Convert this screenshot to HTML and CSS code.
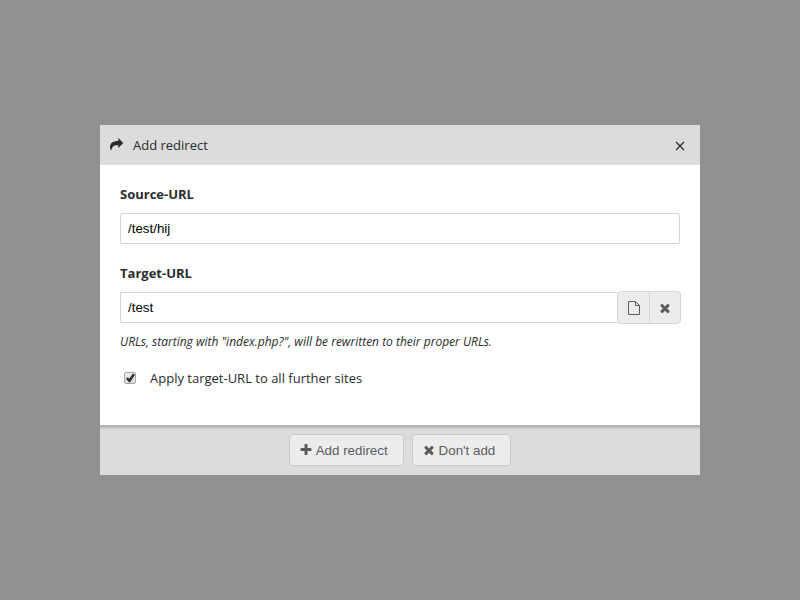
FILE: index.html
```html
<!DOCTYPE html>
<html lang="en">
<head>
<meta charset="utf-8">
<meta name="viewport" content="width=device-width, initial-scale=1">
<title>Add redirect</title>
<link rel="stylesheet" href="styles.css">
</head>
<body>
<svg class="sprite" aria-hidden="true">
  <symbol id="times" viewBox="0 0 1792 1792"><path d="M1490 1322q0 40-28 68l-136 136q-28 28-68 28t-68-28l-294-294-294 294q-28 28-68 28t-68-28l-136-136q-28-28-28-68t28-68l294-294-294-294q-28-28-28-68t28-68l136-136q28-28 68-28t68 28l294 294 294-294q28-28 68-28t68 28l136 136q28 28 28 68t-28 68l-294 294 294 294q28 28 28 68z"/></symbol>
</svg>
<form class="dialog" role="dialog" aria-labelledby="title">
  <header class="header">
    <svg class="icon" viewBox="0 0 14 14" aria-hidden="true"><path d="M8.300 0 L13.300 5 L8.300 10 V7.300 C4.200 7.100 2.200 7.900 1.400 12.600 C.5 11.500 0 10.300 0 8.900 C.1 4.900 3.100 2.900 8.300 2.900Z"/></svg>
    <h1 class="title" id="title">Add redirect</h1>
    <button class="close" type="button" aria-label="Close"><svg class="cross" viewBox="0 0 10 10" aria-hidden="true"><path d="M1 1l8 8M9 1l-8 8"/></svg></button>
  </header>
  <div class="content">
    <div class="field">
      <label class="label" for="source">Source-URL</label>
      <input class="input" id="source" type="text" value="/test/hij">
    </div>
    <div class="field">
      <label class="label" for="target">Target-URL</label>
      <div class="group">
        <input class="input" id="target" type="text" value="/test">
        <button class="button square" type="button" aria-label="Choose page"><svg class="icon page" viewBox="0 0 14 14" aria-hidden="true"><path d="M1.500.5H8.500L12.500 4.500V13.500H1.500ZM8.500.5V4.500H12.500"/></svg></button>
        <button class="button square last" type="button" aria-label="Clear"><svg class="icon" aria-hidden="true"><use href="#times"/></svg></button>
      </div>
    </div>
    <p class="hint">URLs, starting with "index.php?", will be rewritten to their proper URLs.</p>
    <label class="check"><input class="box" type="checkbox" checked><span>Apply target-URL to all further sites</span></label>
  </div>
  <footer class="footer">
    <button class="button" type="submit"><svg class="icon" viewBox="0 0 1792 1792" aria-hidden="true"><path d="M1600 736v192q0 40-28 68t-68 28h-416v416q0 40-28 68t-68 28h-192q-40 0-68-28t-28-68v-416h-416q-40 0-68-28t-28-68v-192q0-40 28-68t68-28h416v-416q0-40 28-68t68-28h192q40 0 68 28t28 68v416h416q40 0 68 28t28 68z"/></svg>Add redirect</button>
    <button class="button" type="button"><svg class="icon" aria-hidden="true"><use href="#times"/></svg>Don't add</button>
  </footer>
</form>
</body>
</html>
```
FILE: styles.css
```css
* { box-sizing: border-box; }

body {
  margin: 0;
  min-height: 100vh;
  display: flex;
  align-items: center;
  justify-content: center;
  background: #919191;
  color: #292c2e;
  font: 13px/20px "Open Sans", sans-serif;
}

.sprite { position: absolute; width: 0; height: 0; }

.dialog { width: 75%; background: #fff; }

.header {
  display: flex;
  align-items: center;
  gap: 9px;
  height: 40px;
  padding: 0 10px;
  background: #dcdcdc;
}

.title { flex: 1; margin: 0; font-size: 13px; font-weight: 400; }

.icon { width: 14px; height: 14px; fill: currentColor; flex: none; }

.page { fill: none; stroke: currentColor; }

.close {
  display: grid;
  place-items: center;
  width: 20px;
  height: 20px;
  padding: 2px 0 0;
  border: 0;
  background: none;
  color: #222;
}

.cross { width: 10px; height: 10px; fill: none; stroke: currentColor; stroke-width: 1.1; }

.content { padding: 19px 20px 37px; }

.field { margin-bottom: 19px; }

.label { display: block; margin-bottom: 9px; font-weight: 700; }

.input {
  display: block;
  flex: 1;
  min-width: 0;
  width: 100%;
  height: 31px;
  padding: 0 7px;
  border: 1px solid #d5d5d5;
  border-radius: 2px;
  background: #fff;
  color: #000;
  font-family: "Liberation Sans", sans-serif;
}

.group { display: flex; align-items: center; margin-right: -1px; }

.group .input { border-radius: 2px 0 0 2px; border-right: 0; }

.button {
  display: flex;
  align-items: center;
  gap: 3px;
  height: 32px;
  padding: 0 15px 0 9px;
  border: 1px solid #c9c9c9;
  border-radius: 4px;
  background: #ececec;
  color: #5c5c5c;
  font-family: "Liberation Sans", sans-serif;
}

.square {
  justify-content: center;
  width: 33px;
  height: 33px;
  margin: -1px 0;
  padding: 0;
  border-color: #d5d5d5;
  border-radius: 4px 0 0 4px;
}

.last { width: 32px; margin-left: -1px; border-radius: 0 4px 4px 0; }

.hint { margin: -10px 0 16px; font-size: 12px; font-style: italic; }

.check { display: flex; align-items: center; gap: 14px; }

.box {
  appearance: none;
  width: 12px;
  height: 12px;
  margin: 0 0 0 4px;
  border: 1px solid #a5a5a5;
  border-radius: 2px;
  background: linear-gradient(#eee, #ddd);
}

.box:checked::before {
  content: "";
  display: block;
  width: 10px;
  height: 10px;
  background: #333;
  clip-path: polygon(10% 58%, 28% 42%, 42% 58%, 78% 4%, 100% 18%, 52% 92%, 38% 92%);
}

.footer {
  display: flex;
  align-items: center;
  justify-content: center;
  gap: 8px;
  height: 50px;
  background: linear-gradient(#b2b2b2, #b8b8b8 2px, #d0d0d0 3px, #dcdcdc 6px);
}
```
